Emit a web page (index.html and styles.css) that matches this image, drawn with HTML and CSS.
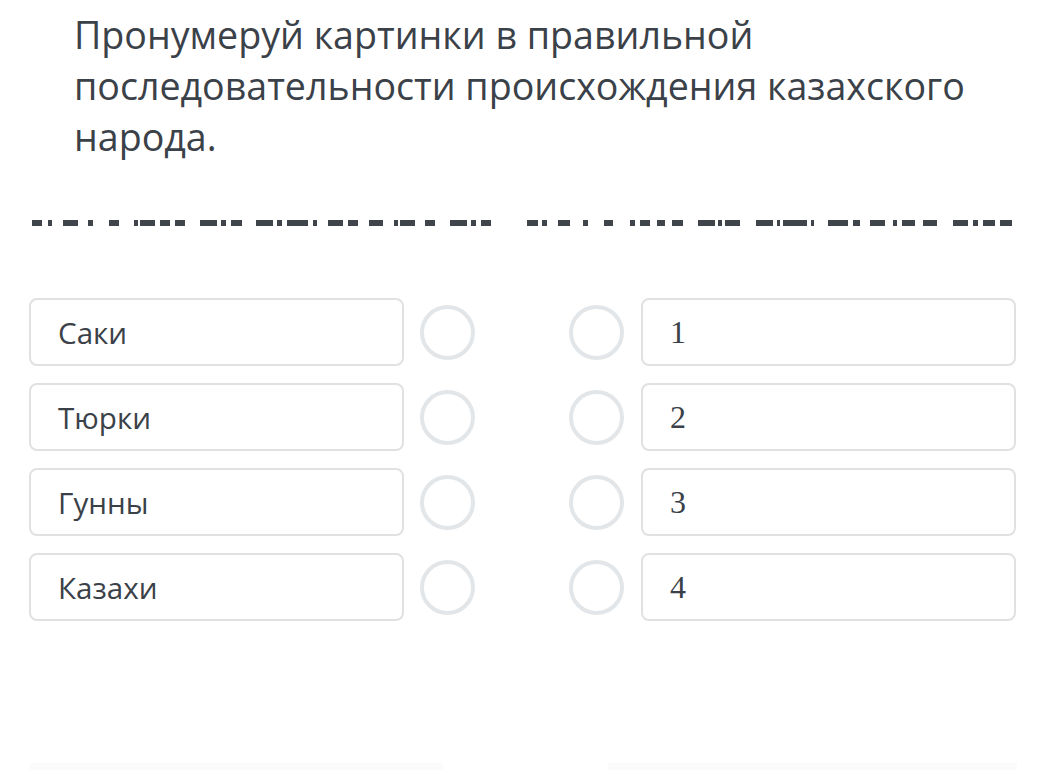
FILE: index.html
```html
<!DOCTYPE html>
<html lang="ru">
<head>
<meta charset="utf-8">
<link rel="stylesheet" href="styles.css">
</head>
<body>
<div class="page">
  <h1 class="title">Пронумеруй картинки в правильной последовательности происхождения казахского народа.</h1>
  <div class="dashes">
    <svg width="1061" height="6" viewBox="0 0 1061 6" fill="#40454b">
      <rect x="32" y="0" width="10" height="6"/><rect x="48" y="0" width="4" height="6"/>
      <rect x="63" y="0" width="15" height="6"/><rect x="88" y="0" width="5" height="6"/>
      <rect x="109" y="0" width="10" height="6"/><rect x="134" y="0" width="4" height="6"/>
      <rect x="140" y="0" width="15" height="6"/><rect x="160" y="0" width="10" height="6"/>
      <rect x="175" y="0" width="10" height="6"/><rect x="200" y="0" width="17" height="6"/>
      <rect x="221" y="0" width="5" height="6"/><rect x="231" y="0" width="11" height="6"/>
      <rect x="256" y="0" width="17" height="6"/><rect x="277" y="0" width="5" height="6"/>
      <rect x="287" y="0" width="21" height="6"/><rect x="313" y="0" width="4" height="6"/>
      <rect x="328" y="0" width="15" height="6"/><rect x="348" y="0" width="10" height="6"/>
      <rect x="369" y="0" width="14" height="6"/><rect x="394" y="0" width="4" height="6"/>
      <rect x="400" y="0" width="15" height="6"/><rect x="425" y="0" width="10" height="6"/>
      <rect x="450" y="0" width="17" height="6"/><rect x="471" y="0" width="5" height="6"/>
      <rect x="481" y="0" width="10" height="6"/>
      <rect x="527" y="0" width="11" height="6"/><rect x="542" y="0" width="5" height="6"/>
      <rect x="558" y="0" width="12" height="6"/><rect x="583" y="0" width="5" height="6"/>
      <rect x="604" y="0" width="9" height="6"/><rect x="630" y="0" width="5" height="6"/>
      <rect x="640" y="0" width="10" height="6"/><rect x="657" y="0" width="8" height="6"/>
      <rect x="672" y="0" width="11" height="6"/><rect x="698" y="0" width="17" height="6"/>
      <rect x="718" y="0" width="4" height="6"/><rect x="725" y="0" width="15" height="6"/>
      <rect x="756" y="0" width="17" height="6"/><rect x="777" y="0" width="3" height="6"/>
      <rect x="783" y="0" width="24" height="6"/><rect x="811" y="0" width="3" height="6"/>
      <rect x="828" y="0" width="20" height="6"/><rect x="853" y="0" width="7" height="6"/>
      <rect x="870" y="0" width="15" height="6"/><rect x="893" y="0" width="4" height="6"/>
      <rect x="902" y="0" width="13" height="6"/><rect x="923" y="0" width="14" height="6"/>
      <rect x="953" y="0" width="15" height="6"/><rect x="973" y="0" width="5" height="6"/>
      <rect x="983" y="0" width="12" height="6"/><rect x="1000" y="0" width="12" height="6"/>
    </svg>
  </div>
  <div class="rows">
    <div class="row">
      <div class="box"><span class="label">Саки</span></div>
      <span class="dot"></span>
      <span class="dot dot-right"></span>
      <div class="box"><span class="num">1</span></div>
    </div>
    <div class="row">
      <div class="box"><span class="label">Тюрки</span></div>
      <span class="dot"></span>
      <span class="dot dot-right"></span>
      <div class="box"><span class="num">2</span></div>
    </div>
    <div class="row">
      <div class="box"><span class="label">Гунны</span></div>
      <span class="dot"></span>
      <span class="dot dot-right"></span>
      <div class="box"><span class="num">3</span></div>
    </div>
    <div class="row">
      <div class="box"><span class="label">Казахи</span></div>
      <span class="dot"></span>
      <span class="dot dot-right"></span>
      <div class="box"><span class="num">4</span></div>
    </div>
  </div>
  <div class="faint-row">
    <div class="faint"></div>
    <div class="faint faint-right"></div>
  </div>
</div>
</body>
</html>
```
FILE: styles.css
```css
html, body {
  margin: 0;
  padding: 0;
  background: #ffffff;
}
.page {
  width: 1061px;
  height: 770px;
  overflow: hidden;
  font-family: "Open Sans", "Noto Sans", sans-serif;
  color: #3b4148;
}
.title {
  margin: 0;
  padding: 9px 60px 0 74px;
  font-size: 37.6px;
  font-weight: 400;
  line-height: 51px;
  color: #3b4148;
}
.dashes {
  margin-top: 58px;
  height: 6px;
  line-height: 0;
}
.rows {
  margin-top: 72px;
  padding-left: 29px;
  display: flex;
  flex-direction: column;
  gap: 17px;
}
.row {
  display: flex;
  align-items: center;
  height: 68px;
}
.box {
  box-sizing: border-box;
  width: 375px;
  height: 68px;
  border: 2px solid #e1e1e1;
  border-radius: 8px;
  display: flex;
  align-items: center;
  padding-left: 27px;
}
.label {
  font-size: 29.6px;
  color: #3b4148;
}
.num {
  font-family: "Liberation Serif", "DejaVu Serif", serif;
  font-size: 32px;
  color: #3b4148;
}
.dot {
  box-sizing: border-box;
  width: 55px;
  height: 55px;
  border: 4px solid #e3e6e9;
  border-radius: 50%;
  margin-left: 16px;
}
.dot-right {
  margin-left: 94px;
  margin-right: 17px;
}
.faint-row {
  margin-top: 142px;
  display: flex;
  padding-left: 30px;
}
.faint {
  width: 413px;
  height: 8px;
  background: #fbfbfb;
}
.faint-right {
  margin-left: 165px;
  width: 409px;
}
```
